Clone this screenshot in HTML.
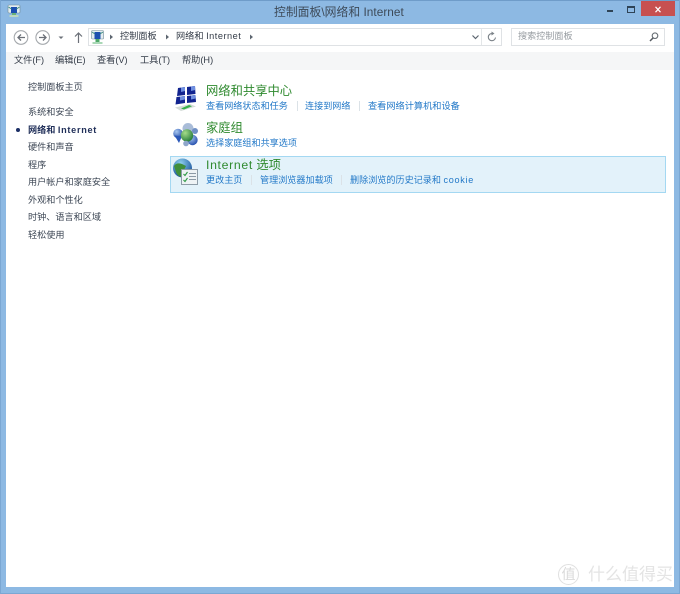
<!DOCTYPE html>
<html lang="zh-CN"><head><meta charset="utf-8"><title>控制面板</title>
<style>
html,body{margin:0;padding:0;width:680px;height:594px;overflow:hidden;background:#8db9e3}
*{box-sizing:border-box}
body{font-family:"Liberation Sans","Noto Sans CJK SC",sans-serif}
#w{position:absolute;left:0;top:0;width:680px;height:594px;background:#8db9e3;filter:blur(.35px)}
.a{position:absolute;white-space:nowrap;line-height:1}
.s{font-size:9.15px;color:#3c4654}
.m{font-size:9.2px;color:#333b47;top:56px}
.l{font-size:9.1px;color:#2379c8}
.h{font-size:12.3px;color:#2f8a2f}
.i{letter-spacing:.5px}
.sep{position:absolute;width:1px;height:10px;background:#dbe2e7}
</style></head><body><div id="w">
<div class="a" style="left:0;top:0;width:680px;height:1px;background:#6f9cc9"></div>
<div class="a" style="left:0;top:0;width:1px;height:594px;background:#7ba7d3"></div>
<div class="a" style="left:679px;top:0;width:1px;height:594px;background:#7ba7d3"></div>
<div class="a" style="left:0;top:593px;width:680px;height:1px;background:#7ba7d3"></div>

<!-- title bar -->
<svg class="a" style="left:7px;top:4px" width="14" height="14" viewBox="0 0 14 14"><rect x="1" y="1" width="12" height="8" rx="1" fill="#e4edf0" stroke="#6f8a96" stroke-width=".6"/><rect x="4" y="3" width="6" height="6" fill="#1c4fb0"/><path d="M1.500 3l3 2M12.500 3l-3 2" stroke="#3f8f80"/><rect x="5" y="9" width="4" height="2" fill="#69b079"/><rect x="2.500" y="11" width="9" height="2" fill="#bcd8c0"/></svg>
<div class="a" style="left:274px;top:7px;font-size:11.8px;letter-spacing:.04px;color:#3d4a58">控制面板\网络和 Internet</div>
<div class="a" style="left:607px;top:10px;width:6px;height:2px;background:#2e4356"></div>
<div class="a" style="left:627px;top:6px;width:8px;height:7px;border:1px solid #2e4356;border-top-width:2px"></div>
<div class="a" style="left:641px;top:1px;width:34px;height:15px;background:#c75050"></div>
<svg class="a" style="left:654px;top:5.500px" width="8" height="7" viewBox="0 0 8 7"><path d="M1.500 .8l5 5.400M6.500 .8l-5 5.400" stroke="#fff" stroke-width="1.200"/></svg>

<!-- client -->
<div class="a" style="left:6px;top:24px;width:668px;height:563px;background:#fff"></div>

<!-- nav -->
<svg class="a" style="left:13px;top:28px" width="72" height="19" viewBox="0 0 72 19">
<g fill="none" stroke="#a5a9ad" stroke-width="1.100"><circle cx="8" cy="9.500" r="6.800"/><circle cx="29.700" cy="9.500" r="6.800"/></g>
<path d="M12 9.500H5M8 6.500l-3 3 3 3" fill="none" stroke="#6b7078" stroke-width="1.300"/>
<path d="M26 9.500h7M30 6.500l3 3-3 3" fill="none" stroke="#6b7078" stroke-width="1.300"/>
<path d="M45.500 8.500h5l-2.500 2.500z" fill="#6b7078"/>
<path d="M65.500 15V5M62 8.500l3.500-3.500 3.500 3.500" fill="none" stroke="#6b7078" stroke-width="1.200"/>
</svg>

<!-- address -->
<div class="a" style="left:88px;top:28px;width:414px;height:18px;border:1px solid #dfe2e5;background:#fff"></div>
<div class="a" style="left:481px;top:29px;width:1px;height:16px;background:#e3e6e8"></div>
<svg class="a" style="left:90px;top:29px" width="15" height="16" viewBox="0 0 15 16"><rect x="1.500" y="1.500" width="12" height="8.500" rx="1" fill="#e4edf0" stroke="#6f8a96" stroke-width=".6"/><rect x="4.500" y="3" width="6" height="7" fill="#1c4fb0"/><path d="M2 3l3 2M13 3l-3 2" stroke="#3f8f80"/><rect x="5.500" y="10" width="4" height="3" fill="#4fa868"/><rect x="2.500" y="13" width="10" height="2" fill="#a9d8b6"/></svg>
<svg class="a" style="left:108px;top:32px" width="146" height="10" viewBox="0 0 146 10"><path d="M2 2.500l3 2.500-3 2.500zM58 2.500l3 2.500-3 2.500zM142 2.500l3 2.500-3 2.500z" fill="#5d6670"/></svg>
<div class="a" style="left:120px;top:32px;font-size:9.200px;color:#333b47">控制面板</div>
<div class="a" style="left:176px;top:32px;font-size:9.200px;color:#333b47">网络和 <span class="i">Internet</span></div>
<svg class="a" style="left:471px;top:33px" width="9" height="8" viewBox="0 0 9 8"><path d="M1.500 2.500L4.500 5.500 7.500 2.500" fill="none" stroke="#5d6670" stroke-width="1.200"/></svg>
<svg class="a" style="left:486px;top:31px" width="12" height="12" viewBox="0 0 12 12"><path d="M9.500 6.500A3.600 3.600 0 1 1 6 2.500" fill="none" stroke="#7b8288" stroke-width="1.100"/><path d="M5.500 .5L8.500 2.500 5.500 4.500z" fill="#7b8288"/></svg>

<!-- search -->
<div class="a" style="left:511px;top:28px;width:154px;height:18px;border:1px solid #dfe2e5;background:#fff"></div>
<div class="a" style="left:518px;top:32px;font-size:9.100px;color:#969ba0">搜索控制面板</div>
<svg class="a" style="left:648px;top:31px" width="12" height="12" viewBox="0 0 12 12"><circle cx="7" cy="4.700" r="2.800" fill="none" stroke="#666d73" stroke-width="1.100"/><path d="M5 7L2 10" stroke="#555b61" stroke-width="1.500"/></svg>

<!-- menu -->
<div class="a" style="left:6px;top:52px;width:668px;height:18px;background:#f5f6f7"></div>
<div class="a m" style="left:14px">文件(F)</div>
<div class="a m" style="left:55px">编辑(E)</div>
<div class="a m" style="left:97px">查看(V)</div>
<div class="a m" style="left:140px">工具(T)</div>
<div class="a m" style="left:182px">帮助(H)</div>

<!-- left -->
<div class="a s" style="left:28px;top:83px">控制面板主页</div>
<div class="a s" style="left:28px;top:108px">系统和安全</div>
<div class="a" style="left:16px;top:127.500px;width:4px;height:4px;border-radius:50%;background:#1c2f66"></div>
<div class="a s" style="left:28px;top:126px;font-weight:700;color:#1f2e58">网络和 <span style="letter-spacing:.7px">Internet</span></div>
<div class="a s" style="left:28px;top:143px">硬件和声音</div>
<div class="a s" style="left:28px;top:161px">程序</div>
<div class="a s" style="left:28px;top:178px">用户帐户和家庭安全</div>
<div class="a s" style="left:28px;top:196px">外观和个性化</div>
<div class="a s" style="left:28px;top:213px">时钟、语言和区域</div>
<div class="a s" style="left:28px;top:231px">轻松使用</div>

<!-- section 1 -->
<svg class="a" style="left:172px;top:85px" width="27" height="27" viewBox="0 0 27 27">
<path d="M6 3l7-1v8l-8 1zM15 2l8-1 .5 8-8.500 1zM4.500 12l8.500-1v7l-9.500 1.500zM15 11l8.500-1 .5 7-9 1z" fill="#12248f"/>
<path d="M9 2.600l4-.6v4l-4 1zM19 1.500l4-.5.2 4-4.200 1zM8 11.600l5-.6v3.500l-5 1zM19 10.600l4.500-.6.2 3.500-4.700 1z" fill="#6f8fe0"/>
<path d="M3 22.500l15-3.500 6 2.500-15 4.500z" fill="#d5dcd8"/><path d="M9 23.500l8-3.500 3 1.200-8 3.300z" fill="#35b04a"/>
</svg>
<div class="a h" style="left:206px;top:85px">网络和共享中心</div>
<div class="a l" style="left:206px;top:102px">查看网络状态和任务</div>
<div class="sep" style="left:297px;top:101px"></div>
<div class="a l" style="left:305px;top:102px">连接到网络</div>
<div class="sep" style="left:359px;top:101px"></div>
<div class="a l" style="left:368px;top:102px;font-size:9.200px">查看网络计算机和设备</div>

<!-- section 2 -->
<svg class="a" style="left:172px;top:122px" width="27" height="26" viewBox="0 0 27 26">
<defs><radialGradient id="b" cx=".35" cy=".3" r=".8"><stop offset="0" stop-color="#a9c8f0"/><stop offset="1" stop-color="#1b46a8"/></radialGradient><radialGradient id="g" cx=".35" cy=".3" r=".8"><stop offset="0" stop-color="#a5dc8a"/><stop offset="1" stop-color="#1b7534"/></radialGradient></defs>
<circle cx="16" cy="6.500" r="5.500" fill="#a9bcd8"/><circle cx="23" cy="9" r="3" fill="#6f8fc4"/>
<circle cx="6" cy="11.500" r="4.800" fill="url(#b)"/><path d="M2.500 13.500l4.500 7.500 3-7z" fill="#2b58b8"/>
<circle cx="20.500" cy="18" r="5.200" fill="url(#b)"/>
<circle cx="15" cy="13.500" r="6.200" fill="url(#g)"/>
<circle cx="14" cy="21.500" r="2.800" fill="#8ea6ca"/>
</svg>
<div class="a h" style="left:206px;top:122px">家庭组</div>
<div class="a l" style="left:206px;top:139px">选择家庭组和共享选项</div>

<!-- section 3 -->
<div class="a" style="left:170px;top:156px;width:496px;height:37px;background:#e3f2fa;border:1px solid #a4d8f2"></div>
<svg class="a" style="left:172px;top:158px" width="27" height="28" viewBox="0 0 27 28">
<defs><radialGradient id="e" cx=".4" cy=".25" r=".8"><stop offset="0" stop-color="#8fd0ee"/><stop offset="1" stop-color="#0f4a96"/></radialGradient></defs>
<circle cx="10.500" cy="10" r="9.500" fill="url(#e)"/>
<path d="M2 8c2-3 5-3 8-2l4 2-2 4-2 3 1 4c-4 0-6-2-7-5z" fill="#3f8f3a"/>
<rect x="9.500" y="11.500" width="16" height="15" fill="#eef3f5" stroke="#8e9da8"/>
<path d="M11.500 16l1.500 1.500L15.500 14M11.500 22l1.500 1.500L15.500 20" fill="none" stroke="#2f9a46" stroke-width="1.100"/>
<path d="M17 15.500h7M17 18.500h7M17 21.500h7" stroke="#8c9aa6"/>
</svg>
<div class="a h" style="left:206px;top:159px"><span style="letter-spacing:.65px">Internet</span> 选项</div>
<div class="a l" style="left:206px;top:176px">更改主页</div>
<div class="sep" style="left:251px;top:175px"></div>
<div class="a l" style="left:260px;top:176px">管理浏览器加载项</div>
<div class="sep" style="left:341px;top:175px"></div>
<div class="a l" style="left:350px;top:176px">删除浏览的历史记录和 <span style="letter-spacing:.7px">cookie</span></div>

<!-- watermark -->
<div class="a" style="left:558px;top:564px;width:21px;height:21px;border:1px solid #e0e0e0;border-radius:50%;text-align:center;font-size:14px;line-height:19px;color:#dadada">值</div>
<div class="a" style="left:588px;top:566px;font-size:17px;color:#e4e4e4">什么值得买</div>
</div></body></html>
